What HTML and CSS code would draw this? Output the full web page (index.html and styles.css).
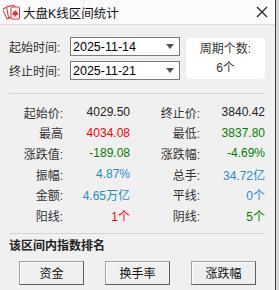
FILE: index.html
```html
<!DOCTYPE html>
<html lang="zh">
<head>
    <meta charset="UTF-8">
    <title>大盘K线区间统计</title>
    <link rel="stylesheet" href="styles.css">
</head>
<body>
    <div class="window">
        <div class="titlebar">
            <svg class="app-icon" width="18" height="18" viewBox="0 0 18 18">
                <rect x="1.5" y="4" width="8" height="11" rx="1" fill="#fff" stroke="#d9363e" transform="rotate(-25 5.5 9.5)"/>
                <rect x="4.5" y="3" width="8" height="11" rx="1" fill="#fff" stroke="#d9363e" transform="rotate(-10 8.5 8.5)"/>
                <rect x="8" y="4" width="8.5" height="12" rx="1" fill="#fff" stroke="#d9363e"/>
                <path d="M12.2 7 C13.5 8.8 15 9.5 15 11 C15 12.2 13.6 12.6 12.7 11.8 L13.3 13.6 L11.1 13.6 L11.7 11.8 C10.8 12.6 9.4 12.2 9.4 11 C9.4 9.5 10.9 8.8 12.2 7 Z" fill="#d9363e"/>
            </svg>
            <span class="title">大盘K线区间统计</span>
            <svg class="close" width="12" height="12" viewBox="0 0 12 12">
                <path d="M1 1 L11 11 M11 1 L1 11" stroke="#222" stroke-width="1.2"/>
            </svg>
        </div>

        <div class="content">
            <div class="range">
                <div class="pickers">
                    <div class="picker-row">
                        <span class="picker-label">起始时间:</span>
                        <div class="combo"><span>2025-11-14</span><i class="arrow"></i></div>
                    </div>
                    <div class="picker-row">
                        <span class="picker-label">终止时间:</span>
                        <div class="combo"><span>2025-11-21</span><i class="arrow"></i></div>
                    </div>
                </div>
                <div class="period">
                    <div>周期个数:</div>
                    <div>6个</div>
                </div>
            </div>

            <div class="rule"></div>

            <div class="stats">
                <span class="lbl">起始价:</span><span class="val">4029.50</span>
                <span class="lbl">终止价:</span><span class="val">3840.42</span>

                <span class="lbl">最高</span><span class="val up">4034.08</span>
                <span class="lbl">最低:</span><span class="val down">3837.80</span>

                <span class="lbl">涨跌值:</span><span class="val down">-189.08</span>
                <span class="lbl">涨跌幅:</span><span class="val down">-4.69%</span>

                <span class="lbl">振幅:</span><span class="val info">4.87%</span>
                <span class="lbl">总手:</span><span class="val info">34.72亿</span>

                <span class="lbl">金额:</span><span class="val info">4.65万亿</span>
                <span class="lbl">平线:</span><span class="val info">0个</span>

                <span class="lbl">阳线:</span><span class="val up">1个</span>
                <span class="lbl">阴线:</span><span class="val down">5个</span>
            </div>

            <div class="rule"></div>

            <div class="rank-title">该区间内指数排名</div>
            <div class="buttons">
                <button>资金</button>
                <button>换手率</button>
                <button>涨跌幅</button>
            </div>
        </div>
    </div>
</body>
</html>
```

FILE: styles.css
```css
body {
    margin: 0;
    background: #d4d8da;
    font-family: "Liberation Sans", "Noto Sans CJK SC", sans-serif;
    font-size: 12px;
    color: #333;
}
.window {
    width: 275px;
    height: 290px;
    background: #f0f0f0;
    border-right: 1px solid #3c3c3c;
    overflow: hidden;
}
.titlebar {
    height: 25px;
    display: flex;
    align-items: center;
    padding-left: 3px;
    background: #fbfbfb;
    border-bottom: 1px solid #dadada;
    box-sizing: border-box;
}
.app-icon {
    flex: none;
}
.title {
    margin-left: 2px;
    font-size: 12.5px;
    color: #111;
}
.close {
    margin-left: auto;
    margin-right: 7px;
}
.content {
    padding: 12px 10px 0 9px;
}
.range {
    display: flex;
    align-items: flex-start;
}
.pickers {
    display: flex;
    flex-direction: column;
    gap: 5px;
}
.picker-row {
    display: flex;
    align-items: center;
    gap: 8px;
}
.picker-label {
    width: 53px;
    color: #333;
}
.combo {
    width: 106px;
    height: 17px;
    border: 1px solid #7a7a7a;
    background: #fff;
    display: flex;
    align-items: center;
    padding-left: 2px;
    font-size: 12.5px;
    color: #000;
}
.arrow {
    margin-left: auto;
    margin-right: 5px;
    width: 0;
    height: 0;
    border-left: 4.5px solid transparent;
    border-right: 4.5px solid transparent;
    border-top: 5px solid #555;
}
.period {
    margin-left: 6px;
    margin-top: 1px;
    width: 79px;
    height: 41px;
    background: #fff;
    border-radius: 4px;
    display: flex;
    flex-direction: column;
    justify-content: center;
    align-items: center;
    gap: 3px;
    color: #333;
    line-height: 16px;
}
.rule {
    height: 1px;
    background: #d4d4d4;
    margin-right: 0;
}
.range + .rule {
    margin-top: 13px;
}
.stats {
    display: grid;
    grid-template-columns: 54px 67px 70px 65px;
    grid-auto-rows: 20.6px;
    align-items: center;
    padding: 8px 0 7px;
}
.lbl {
    text-align: right;
    color: #333;
}
.val {
    text-align: right;
    color: #222;
}
.up {
    color: #ff0000;
}
.down {
    color: #008000;
}
.info {
    color: #1e8cc8;
}
.rank-title {
    margin-top: 4px;
    font-weight: bold;
    color: #222;
    line-height: 16px;
}
.buttons {
    display: flex;
    gap: 21px;
    padding-left: 10px;
    margin-top: 7px;
}
button {
    width: 65px;
    height: 24px;
    font-family: inherit;
    font-size: 12px;
    color: #111;
    background: #efefef;
    border: 1px solid #a0a0a0;
    border-right-color: #5f5f5f;
    border-bottom-color: #5f5f5f;
    box-shadow: inset 1px 1px #fff;
    padding: 0;
}
```
